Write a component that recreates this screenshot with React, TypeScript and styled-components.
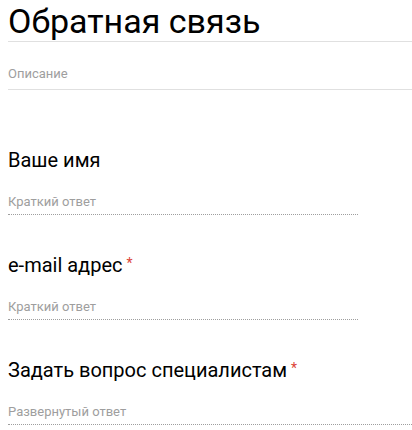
import { FC } from "react";
import { styled, createGlobalStyle } from "styled-components";

const GlobalStyle = createGlobalStyle`
  body {
    margin: 0;
    background: #fff;
    font-family: Roboto, "Noto Sans", Arial, sans-serif;
  }
`;

const Form = styled.div`
  width: 412px;
  padding-left: 8px;
  box-sizing: border-box;
  display: flex;
  flex-direction: column;
`;

const Title = styled.div`
  padding-top: 2px;
  font-size: 34px;
  line-height: 39px;
  font-weight: 400;
  color: #000;
  border-bottom: 1px solid #e0e0e0;
  white-space: nowrap;
`;

const Description = styled.div`
  padding: 24px 0 7px;
  font-size: 13px;
  line-height: 16px;
  color: #9e9e9e;
  border-bottom: 1px solid #e0e0e0;
`;

const Questions = styled.div`
  padding-top: 20px;
  display: flex;
  flex-direction: column;
`;

const Question = styled.div`
  padding-top: 38px;
  display: flex;
  flex-direction: column;
`;

const Label = styled.div`
  height: 24px;
  font-size: 20px;
  line-height: 24px;
  color: #000;
`;

const Required = styled.span`
  color: #db4437;
  font-size: 14px;
  line-height: 1;
  padding-left: 4px;
  vertical-align: 4px;
`;

const Answer = styled.input<{ $wide?: boolean }>`
  margin-top: 21px;
  width: ${(p) => (p.$wide ? "404px" : "350px")};
  box-sizing: border-box;
  padding: 0 0 5px;
  border: none;
  border-bottom: 1px dotted #9e9e9e;
  outline: none;
  background: transparent;
  font-family: inherit;
  font-size: 13px;
  line-height: 16px;
  height: 22px;
  color: #000;

  &::placeholder {
    color: #9e9e9e;
  }
`;

interface Field {
  label: string;
  required?: boolean;
  placeholder: string;
  wide?: boolean;
}

const fields: Field[] = [
  { label: "Ваше имя", placeholder: "Краткий ответ" },
  { label: "e-mail адрес", required: true, placeholder: "Краткий ответ" },
  {
    label: "Задать вопрос специалистам",
    required: true,
    placeholder: "Развернутый ответ",
    wide: true,
  },
];

const App: FC = () => {
  return (
    <>
      <GlobalStyle />
      <Form>
        <Title>Обратная связь</Title>
        <Description>Описание</Description>
        <Questions>
          {fields.map((f, i) => (
            <Question key={`question-${i}`}>
              <Label>
                {f.label}
                {f.required && <Required>*</Required>}
              </Label>
              <Answer placeholder={f.placeholder} $wide={f.wide} readOnly />
            </Question>
          ))}
        </Questions>
      </Form>
    </>
  );
};

export default App;
